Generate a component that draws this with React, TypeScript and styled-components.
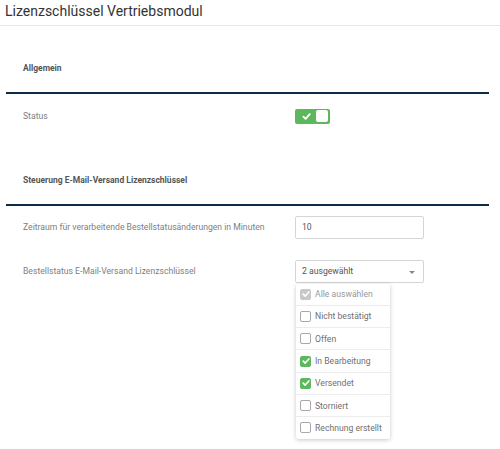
import React from 'react';
import styled, { createGlobalStyle } from 'styled-components';

const GlobalStyle = createGlobalStyle`
  html, body {
    margin: 0;
    padding: 0;
    background: #fff;
  }
  body {
    font-family: Roboto, "Liberation Sans", Arial, sans-serif;
    color: #333;
  }
`;

const Page = styled.div`
  width: 500px;
  height: 449px;
  overflow: hidden;
  position: relative;
`;

const TitleBar = styled.div`
  height: 26px;
  border-bottom: 1px solid #e6e6e6;
  padding: 3px 0 0 5px;
  box-sizing: border-box;
  font-size: 14px;
  color: #333;
`;

const Body = styled.div`
  padding: 0 11px 0 6px;
`;

const SectionHeader = styled.div`
  height: 68px;
  box-sizing: border-box;
  padding: 37px 0 0 17px;
  font-size: 8.5px;
  font-weight: 700;
  color: #555;
  border-bottom: 2px solid #0d2b47;
`;

const Row = styled.div<{ h?: number }>`
  display: flex;
  align-items: center;
  height: ${(p) => p.h ?? 22}px;
`;

const Label = styled.div`
  width: 289px;
  padding-left: 17px;
  box-sizing: border-box;
  font-size: 8.65px;
  color: #808080;
`;

const Toggle = styled.div`
  width: 35px;
  height: 15px;
  background: #5cb85c;
  border-radius: 2px;
  display: flex;
  align-items: center;
  justify-content: space-between;
  padding: 0 2px 0 7px;
  box-sizing: border-box;
`;

const Knob = styled.div`
  width: 12px;
  height: 12px;
  background: #fff;
  border-radius: 2px;
`;

const Input = styled.div`
  width: 129px;
  height: 23px;
  border: 1px solid #d5d5d5;
  border-radius: 2px;
  box-sizing: border-box;
  display: flex;
  align-items: center;
  padding: 0 6px;
  font-size: 8.65px;
  color: #555;
  position: relative;
`;

const Caret = styled.div`
  position: absolute;
  right: 8px;
  top: 10px;
  width: 0;
  height: 0;
  border-left: 3px solid transparent;
  border-right: 3px solid transparent;
  border-top: 3px solid #888;
`;

const SelectWrap = styled.div`
  position: relative;
`;

const Menu = styled.div`
  position: absolute;
  top: 24px;
  left: 1px;
  width: 94px;
  background: #fff;
  box-shadow: 0 1px 4px rgba(0, 0, 0, 0.22);
  border-radius: 2px;
  z-index: 5;
`;

const Item = styled.div<{ muted?: boolean }>`
  height: 21.3px;
  display: flex;
  align-items: center;
  padding-left: 4px;
  gap: 4px;
  font-size: 8.65px;
  color: ${(p) => (p.muted ? '#999' : '#707070')};
  & + & {
    border-top: 1px solid #ececec;
  }
`;

const Box = styled.div<{ state: 'off' | 'on' | 'all' }>`
  width: 11px;
  height: 11px;
  box-sizing: border-box;
  border-radius: 2px;
  border: 1px solid
    ${(p) => (p.state === 'on' ? '#5cb85c' : p.state === 'all' ? '#c8c8c8' : '#a8a8a8')};
  background: ${(p) => (p.state === 'on' ? '#5cb85c' : p.state === 'all' ? '#c8c8c8' : '#fff')};
  display: flex;
  align-items: center;
  justify-content: center;
`;

const Check = ({ size = 8 }: { size?: number }) => (
  <svg width={size} height={size} viewBox="0 0 10 10">
    <path d="M1.5 5.2 L4 7.6 L8.6 2.4" fill="none" stroke="#fff" strokeWidth="2" strokeLinecap="round" strokeLinejoin="round" />
  </svg>
);

const options: { label: string; state: 'off' | 'on' | 'all' }[] = [
  { label: 'Alle auswählen', state: 'all' },
  { label: 'Nicht bestätigt', state: 'off' },
  { label: 'Offen', state: 'off' },
  { label: 'In Bearbeitung', state: 'on' },
  { label: 'Versendet', state: 'on' },
  { label: 'Storniert', state: 'off' },
  { label: 'Rechnung erstellt', state: 'off' },
];

export default function App() {
  return (
    <Page>
      <GlobalStyle />
      <TitleBar>Lizenzschlüssel Vertriebsmodul</TitleBar>
      <Body>
        <SectionHeader>Allgemein</SectionHeader>
        <Row h={44}>
          <Label>Status</Label>
          <Toggle>
            <Check size={9} />
            <Knob />
          </Toggle>
        </Row>
        <SectionHeader>Steuerung E-Mail-Versand Lizenzschlüssel</SectionHeader>
        <Row h={42}>
          <Label>Zeitraum für verarbeitende Bestellstatusänderungen in Minuten</Label>
          <Input>10</Input>
        </Row>
        <Row h={46}>
          <Label>Bestellstatus E-Mail-Versand Lizenzschlüssel</Label>
          <SelectWrap>
            <Input>
              2 ausgewählt
              <Caret />
            </Input>
            <Menu>
              {options.map((o) => (
                <Item key={o.label} muted={o.state === 'all'}>
                  <Box state={o.state}>{o.state !== 'off' && <Check />}</Box>
                  {o.label}
                </Item>
              ))}
            </Menu>
          </SelectWrap>
        </Row>
      </Body>
    </Page>
  );
}
